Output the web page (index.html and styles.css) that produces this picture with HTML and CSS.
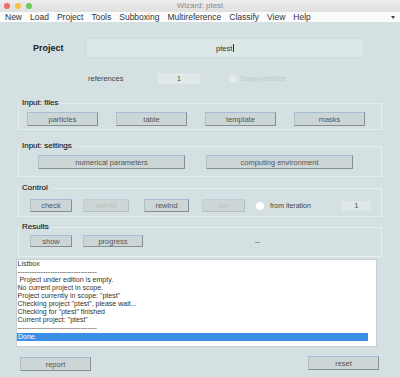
FILE: index.html
```html
<!DOCTYPE html>
<html>
<head>
<meta charset="utf-8">
<title>Wizard: ptest</title>
<link rel="stylesheet" href="styles.css">
</head>
<body>
<div class="window">
  <div class="titlebar">
    <div class="lights">
      <span class="light red"></span>
      <span class="light yellow"></span>
      <span class="light green"></span>
    </div>
    <div class="title">Wizard: ptest</div>
    <div></div>
  </div>
  <div class="menubar">
    <span>New</span>
    <span>Load</span>
    <span>Project</span>
    <span>Tools</span>
    <span>Subboxing</span>
    <span>Multireference</span>
    <span>Classify</span>
    <span>View</span>
    <span>Help</span>
    <span class="menu-end"><svg width="4" height="3" viewBox="0 0 4 3"><path d="M0 0h4L2 3z" fill="#444"/></svg></span>
  </div>
  <div class="content">
    <div class="project-row">
      <div class="project-label">Project</div>
      <div class="project-input">ptest<span class="caret"></span></div>
    </div>
    <div class="refs-row">
      <div class="refs-label">references</div>
      <div class="num-field refs-field">1</div>
      <span class="radio radio-disabled"></span>
      <span class="swap-label">Swap particles</span>
    </div>

    <fieldset class="group group-files">
      <legend>Input: files</legend>
      <div class="btn-row files-row">
        <button class="btn w71">particles</button>
        <button class="btn w71">table</button>
        <button class="btn w71">template</button>
        <button class="btn w71">masks</button>
      </div>
    </fieldset>

    <fieldset class="group group-settings">
      <legend>Input: settings</legend>
      <div class="btn-row settings-row">
        <button class="btn w147">numerical parameters</button>
        <button class="btn w147">computing environment</button>
      </div>
    </fieldset>

    <fieldset class="group group-control">
      <legend>Control</legend>
      <div class="btn-row control-row">
        <button class="btn b-check">check</button>
        <button class="btn b-unfold disabled">unfold</button>
        <button class="btn b-rewind">rewind</button>
        <button class="btn b-run disabled">run</button>
        <span class="radio radio-white"></span>
        <span class="iter-label">from iteration</span>
        <div class="num-field iter-field">1</div>
      </div>
    </fieldset>

    <fieldset class="group group-results">
      <legend>Results</legend>
      <div class="btn-row results-row">
        <button class="btn b-show">show</button>
        <button class="btn b-progress">progress</button>
        <span class="dashes">--</span>
      </div>
    </fieldset>

    <div class="listbox">
      <div class="line">Listbox</div>
      <div class="line">----------------------------------</div>
      <div class="line"> Project under edition is empty.</div>
      <div class="line">No current project in scope.</div>
      <div class="line">Project currently in scope: "ptest"</div>
      <div class="line">Checking project "ptest", please wait...</div>
      <div class="line">Checking for "ptest" finished</div>
      <div class="line">Current project: "ptest"</div>
      <div class="line">----------------------------------</div>
      <div class="line selected">Done.</div>
    </div>

    <div class="bottom-row">
      <button class="btn w71 b-report">report</button>
      <button class="btn w71 b-reset">reset</button>
    </div>
  </div>
</div>
</body>
</html>
```

FILE: styles.css
```css
html, body {
  margin: 0;
  padding: 0;
}

body {
  width: 400px;
  height: 377px;
  overflow: hidden;
  background: #d4e0e1;
  font-family: "Liberation Sans", Arial, sans-serif;
  color: #333;
}

.window {
  width: 400px;
  height: 377px;
  display: flex;
  flex-direction: column;
}

/* title bar */
.titlebar {
  height: 12px;
  background: linear-gradient(#ededed, #e0e0e0);
  display: grid;
  grid-template-columns: 1fr auto 1fr;
  align-items: center;
}

.lights {
  display: flex;
  gap: 5.5px;
  padding-left: 4px;
}

.light {
  width: 5.5px;
  height: 5.5px;
  border-radius: 50%;
}

.red { background: #f1706c; }
.yellow { background: #f6c349; }
.green { background: #6ccf58; }

.title {
  font-size: 8px;
  color: #8a8a8a;
  line-height: 12px;
}

/* menu bar */
.menubar {
  height: 10px;
  background: #fbfbfb;
  display: flex;
  align-items: center;
  gap: 8px;
  padding-left: 5px;
  font-size: 8.5px;
  color: #333;
  line-height: 10px;
}

.menu-end {
  margin-left: auto;
  margin-right: 5px;
  display: flex;
}

/* content */
.content {
  flex: 1;
  display: flex;
  flex-direction: column;
}

.project-row {
  margin-top: 16px;
  height: 20px;
  display: flex;
  align-items: center;
  padding-left: 33px;
}

.project-label {
  width: 53px;
  font-size: 9px;
  font-weight: bold;
  color: #222;
}

.project-input {
  width: 276px;
  height: 18px;
  border: 1px solid #cfdcdd;
  background: #dce7e8;
  display: flex;
  align-items: center;
  justify-content: center;
  font-size: 7.5px;
  color: #333;
}

.caret {
  width: 1px;
  height: 8px;
  background: #333;
  margin-left: 0.5px;
}

.refs-row {
  margin-top: 15px;
  height: 11px;
  display: flex;
  align-items: center;
  padding-left: 88px;
}

.refs-label {
  width: 70px;
  font-size: 7.5px;
  color: #444;
}

.num-field {
  height: 11px;
  background: #e0e9ea;
  font-size: 7px;
  color: #444;
  display: flex;
  align-items: center;
  justify-content: center;
}

.refs-field {
  width: 42px;
}

.radio {
  width: 8px;
  height: 8px;
  border-radius: 50%;
  flex: none;
}

.radio-disabled {
  margin-left: 29px;
  background: #e3ebec;
}

.radio-white {
  background: #ffffff;
  margin-left: 11px;
}

.swap-label {
  margin-left: 3px;
  font-size: 7px;
  color: #bfcacb;
}

/* groups */
.group {
  margin: 0 18px;
  padding: 0;
  border: 1px solid #e6eded;
  min-width: 0;
}

.group legend {
  padding: 0 3px;
  margin-left: 0;
  font-size: 8px;
  line-height: 10px;
  height: 10px;
  color: #111;
  -webkit-text-stroke: 0.1px #111;
}

.group-files { margin-top: 14px; }
.group-settings { margin-top: 11px; }
.group-control { margin-top: 6px; }
.group-results { margin-top: 5px; }

.btn-row {
  display: flex;
  align-items: center;
}

.files-row {
  padding: 4px 0 3px 8px;
  gap: 18px;
}

.settings-row {
  padding: 4px 0 7px 19px;
  gap: 21px;
}

.control-row {
  padding: 6px 0 4px 11px;
}

.results-row {
  padding: 3px 0 9px 11px;
}

.btn {
  box-sizing: border-box;
  height: 14px;
  margin: 0;
  padding: 0;
  background: #cdd6d7;
  border: 1px solid;
  border-color: #a9bad8 #878f91 #878f91 #b3c0c3;
  font-family: "Liberation Sans", Arial, sans-serif;
  font-size: 7.5px;
  color: #555;
  display: flex;
  align-items: center;
  justify-content: center;
}

.btn.disabled {
  color: #b6c0c1;
  border-color: #c2ced5 #b4bdbf #b4bdbf #c2ccce;
}

.w71 { width: 71px; }
.w147 { width: 147px; }

.control-row .btn { height: 13px; }
.results-row .btn { height: 12px; }

.b-check { width: 42px; }
.b-unfold { width: 46px; margin-left: 11px; }
.b-rewind { width: 45px; margin-left: 15px; }
.b-run { width: 43px; margin-left: 13px; }

.iter-label {
  margin-left: 6px;
  width: 72px;
  font-size: 7px;
  color: #444;
}

.iter-field {
  width: 29px;
  height: 10px;
}

.b-show { width: 42px; }
.b-progress { width: 60px; margin-left: 11px; }

.dashes {
  margin-left: 112px;
  font-size: 7.5px;
  color: #444;
}

/* listbox */
.listbox {
  margin: 2px 0 0 16px;
  width: 361px;
  height: 88px;
  box-sizing: border-box;
  background: #ffffff;
  border: 1px solid #c7d0d1;
  padding: 0 8px 0 0;
}

.line {
  height: 8px;
  line-height: 8px;
  font-size: 7px;
  color: #333;
  white-space: pre;
  padding-left: 0.5px;
}

.line.selected {
  background: #3c8fe6;
  color: #ffffff;
  margin-top: 1px;
  padding-left: 1px;
}

/* bottom buttons */
.bottom-row {
  margin-top: 9px;
  display: flex;
  align-items: flex-start;
  justify-content: space-between;
  padding: 0 21px 0 20px;
}

.b-report { margin-top: 1px; }
```
